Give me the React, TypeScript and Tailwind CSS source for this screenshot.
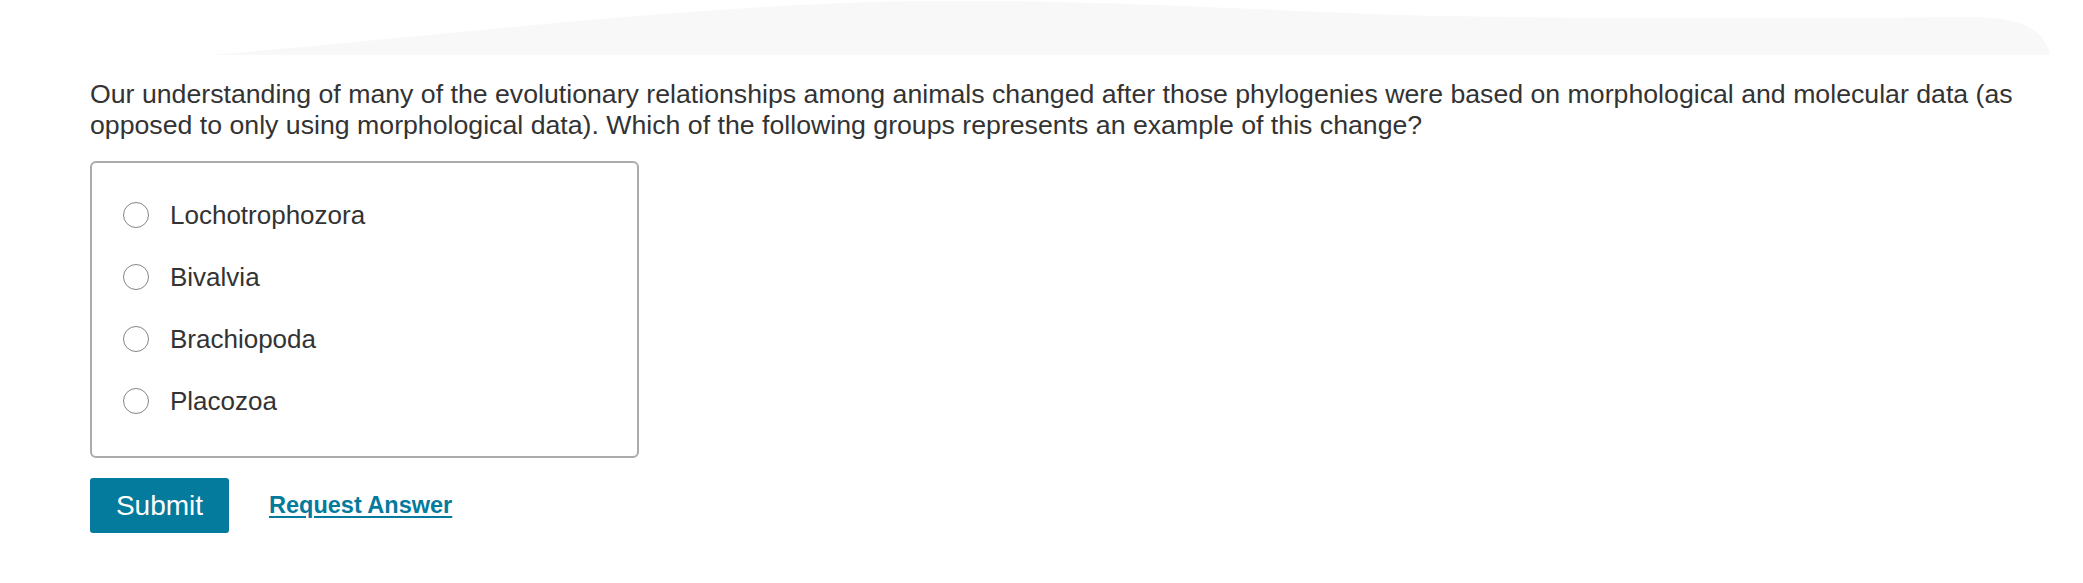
import { useState } from 'react';

const options = ['Lochotrophozora', 'Bivalvia', 'Brachiopoda', 'Placozoa'];

function Wave() {
  return (
    <svg className="block w-full h-[55px]" viewBox="0 0 2083 55" preserveAspectRatio="none">
      <path
        d="M210,55 C420,38 640,10 870,2 C1050,-3 1250,10 1400,15 C1550,19 1800,19 1960,17 C2020,16 2044,28 2050,55 Z"
        fill="#f8f8f8"
      />
    </svg>
  );
}

export default function App() {
  const [picked, setPicked] = useState<number | null>(null);

  return (
    <div className="min-h-[583px] bg-white font-['Liberation_Sans',Arial,sans-serif] text-[#333333]">
      <Wave />
      <div className="pl-[90px] pt-[24px]">
        <p className="w-[1990px] text-[26.7px] leading-[31px]">
          Our understanding of many of the evolutionary relationships among animals changed after those phylogenies were
          based on morphological and molecular data (as opposed to only using morphological data). Which of the following
          groups represents an example of this change?
        </p>

        <div className="mt-[20px] w-[549px] rounded-[6px] border-2 border-[#ababab] pl-[31px] pt-[21px] pb-[24px]">
          {options.map((o, i) => (
            <label key={o} className="flex h-[62px] items-center gap-[21px] cursor-pointer">
              <input
                type="radio"
                name="answer"
                checked={picked === i}
                onChange={() => setPicked(i)}
                className="m-0 h-[26px] w-[26px] shrink-0 appearance-none rounded-full border border-[#858585] bg-white checked:border-[7px] checked:border-[#047a9c]"
              />
              <span className="text-[26px] leading-[30px]">{o}</span>
            </label>
          ))}
        </div>

        <div className="mt-[20px] flex items-center gap-[40px]">
          <button className="h-[55px] w-[139px] rounded-[3px] bg-[#047a9c] text-[28px] text-white">Submit</button>
          <a href="#" className="text-[23.5px] font-bold text-[#047a9c] underline underline-offset-[3px]">
            Request Answer
          </a>
        </div>
      </div>
    </div>
  );
}
